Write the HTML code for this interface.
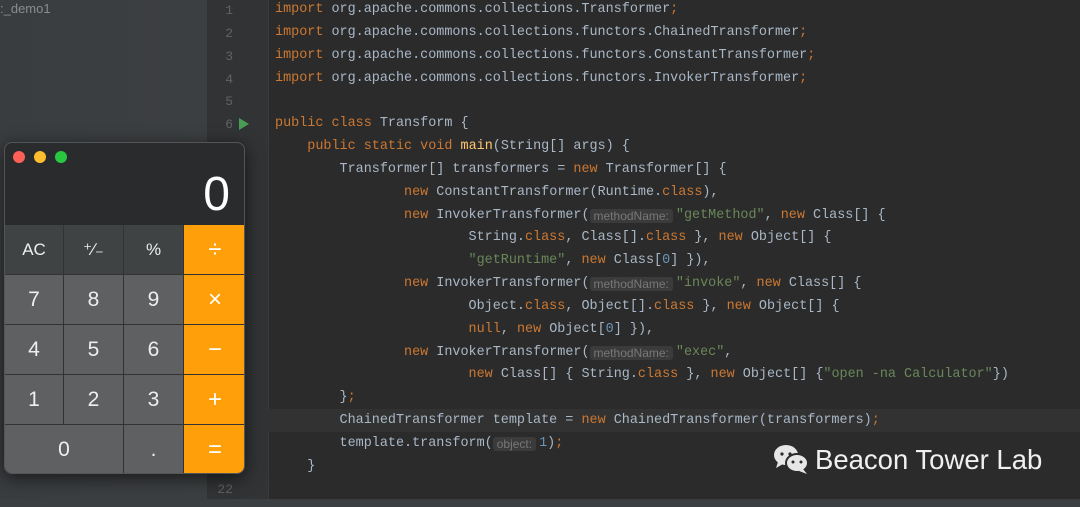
<!DOCTYPE html><html><head><style>
body{margin:0;width:1080px;height:507px;overflow:hidden;background:#2b2b2b;position:relative;font-family:"Liberation Mono",monospace}
.side{position:absolute;left:0;top:0;width:207px;height:500px;background:linear-gradient(90deg,#3a3d40,#3c3f41)}
.gut{position:absolute;left:207px;top:0;width:61px;height:500px;background:#313335;border-right:1px solid #3a3a3a}
.bot{position:absolute;left:0;top:499px;width:1080px;height:8px;background:#3c3f41}
.ln{position:absolute;left:207px;width:26px;text-align:right;color:#606366;font-size:13px}
.l{position:absolute;left:275px;white-space:pre;font-size:13.45px;color:#a9b7c6;line-height:16px;height:16px}
.k{color:#cc7832}.s{color:#6a8759}.n{color:#6897bb}.m{color:#ffc66d}
.h{display:inline-block;line-height:14px;vertical-align:top;margin-top:1px;background:#3b3b3b;color:#787878;font-family:"Liberation Sans",sans-serif;font-size:12px;padding:0 4px;border-radius:3px;margin-right:3px}
.hl{position:absolute;left:268px;top:409px;width:812px;height:23px;background:#323232}
.calc{position:absolute;left:4px;top:142px;width:241px;height:332px;border-radius:8px;overflow:hidden;background:#2a2b2d;box-shadow:0 4px 18px rgba(0,0,0,.6);border:1px solid #555;box-sizing:border-box;font-family:"Liberation Sans",sans-serif}
.dot{position:absolute;top:8px;width:12px;height:12px;border-radius:50%}
.b{position:absolute;display:flex;align-items:center;justify-content:center;color:#eee;font-size:21px;box-sizing:border-box;border-right:1px solid #333;border-bottom:1px solid #333;background:#5e6062}
.f{background:#404344}.o{background:#ff9f0a;color:#fff;font-size:24px;border-right:none}
</style></head><body>
<div class="side"></div>
<div style="position:absolute;left:0;top:1px;color:#8a8d90;font:13px 'Liberation Sans',sans-serif">:_demo1</div>
<div class="gut"></div>
<div class="hl"></div>
<div class="ln" style="top:3px">1</div><div class="ln" style="top:26px">2</div><div class="ln" style="top:49px">3</div><div class="ln" style="top:72px">4</div><div class="ln" style="top:94px">5</div><div class="ln" style="top:117px">6</div><div class="ln" style="top:482px">22</div>
<svg style="position:absolute;left:238px;top:117px" width="12" height="14"><path d="M1 1 L11 7 L1 13Z" fill="#499c54"/></svg>
<div class="l" style="top:2px"><span class="k">import</span> org.apache.commons.collections.Transformer<span class="k">;</span></div>
<div class="l" style="top:25px"><span class="k">import</span> org.apache.commons.collections.functors.ChainedTransformer<span class="k">;</span></div>
<div class="l" style="top:48px"><span class="k">import</span> org.apache.commons.collections.functors.ConstantTransformer<span class="k">;</span></div>
<div class="l" style="top:71px"><span class="k">import</span> org.apache.commons.collections.functors.InvokerTransformer<span class="k">;</span></div>
<div class="l" style="top:116px"><span class="k">public class</span> Transform {</div>
<div class="l" style="top:139px">    <span class="k">public static void</span> <span class="m">main</span>(String[] args) {</div>
<div class="l" style="top:162px">        Transformer[] transformers = <span class="k">new</span> Transformer[] {</div>
<div class="l" style="top:185px">                <span class="k">new</span> ConstantTransformer(Runtime.<span class="k">class</span>),</div>
<div class="l" style="top:208px">                <span class="k">new</span> InvokerTransformer(<span class="h">methodName:</span><span class="s">"getMethod"</span>, <span class="k">new</span> Class[] {</div>
<div class="l" style="top:230px">                        String.<span class="k">class</span>, Class[].<span class="k">class</span> }, <span class="k">new</span> Object[] {</div>
<div class="l" style="top:253px">                        <span class="s">"getRuntime"</span>, <span class="k">new</span> Class[<span class="n">0</span>] }),</div>
<div class="l" style="top:276px">                <span class="k">new</span> InvokerTransformer(<span class="h">methodName:</span><span class="s">"invoke"</span>, <span class="k">new</span> Class[] {</div>
<div class="l" style="top:299px">                        Object.<span class="k">class</span>, Object[].<span class="k">class</span> }, <span class="k">new</span> Object[] {</div>
<div class="l" style="top:322px">                        <span class="k">null</span>, <span class="k">new</span> Object[<span class="n">0</span>] }),</div>
<div class="l" style="top:345px">                <span class="k">new</span> InvokerTransformer(<span class="h">methodName:</span><span class="s">"exec"</span>,</div>
<div class="l" style="top:367px">                        <span class="k">new</span> Class[] { String.<span class="k">class</span> }, <span class="k">new</span> Object[] {<span class="s">"open -na Calculator"</span>})</div>
<div class="l" style="top:390px">        }<span class="k">;</span></div>
<div class="l" style="top:413px">        ChainedTransformer template = <span class="k">new</span> ChainedTransformer(transformers)<span class="k">;</span></div>
<div class="l" style="top:436px">        template.transform(<span class="h">object:</span><span class="n">1</span>)<span class="k">;</span></div>
<div class="l" style="top:459px">    }</div>
<div class="bot"></div>
<svg style="position:absolute;left:772px;top:443px" width="40" height="33"><ellipse cx="14" cy="12" rx="12" ry="10" fill="#e6e6e6"/><path d="M6 19 L4 25 L11 21Z" fill="#e6e6e6"/><circle cx="10" cy="11" r="1.6" fill="#2b2b2b"/><circle cx="18" cy="11" r="1.6" fill="#2b2b2b"/><ellipse cx="25" cy="20" rx="11" ry="9" stroke="#2b2b2b" stroke-width="2" fill="#e6e6e6"/><path d="M31 26 L35 31 L27 28Z" fill="#e6e6e6"/><circle cx="21" cy="19" r="1.5" fill="#2b2b2b"/><circle cx="29" cy="19" r="1.5" fill="#2b2b2b"/></svg>
<div style="position:absolute;left:815px;top:444px;color:#f0f0f0;font:27.5px 'Liberation Sans',sans-serif">Beacon Tower Lab</div>
<div class="calc">
<div class="dot" style="left:8px;background:#fe5f57"></div><div class="dot" style="left:29px;background:#febc2e"></div><div class="dot" style="left:50px;background:#28c840"></div>
<div style="position:absolute;right:14px;top:24px;color:#fff;font-size:48px;font-weight:300">0</div>
<div class="b f" style="left:0;top:82px;width:59px;height:50px;font-size:17px">AC</div>
<div class="b f" style="left:59px;top:82px;width:60px;height:50px;font-size:17px">⁺∕₋</div>
<div class="b f" style="left:119px;top:82px;width:60px;height:50px;font-size:17px">%</div>
<div class="b o" style="left:179px;top:82px;width:62px;height:50px">÷</div>
<div class="b" style="left:0;top:132px;width:59px;height:50px">7</div><div class="b" style="left:59px;top:132px;width:60px;height:50px">8</div><div class="b" style="left:119px;top:132px;width:60px;height:50px">9</div><div class="b o" style="left:179px;top:132px;width:62px;height:50px">×</div>
<div class="b" style="left:0;top:182px;width:59px;height:50px">4</div><div class="b" style="left:59px;top:182px;width:60px;height:50px">5</div><div class="b" style="left:119px;top:182px;width:60px;height:50px">6</div><div class="b o" style="left:179px;top:182px;width:62px;height:50px">−</div>
<div class="b" style="left:0;top:232px;width:59px;height:50px">1</div><div class="b" style="left:59px;top:232px;width:60px;height:50px">2</div><div class="b" style="left:119px;top:232px;width:60px;height:50px">3</div><div class="b o" style="left:179px;top:232px;width:62px;height:50px">+</div>
<div class="b" style="left:0;top:282px;width:119px;height:50px">0</div><div class="b" style="left:119px;top:282px;width:60px;height:50px">.</div><div class="b o" style="left:179px;top:282px;width:62px;height:50px">=</div>
</div>
</body></html>
